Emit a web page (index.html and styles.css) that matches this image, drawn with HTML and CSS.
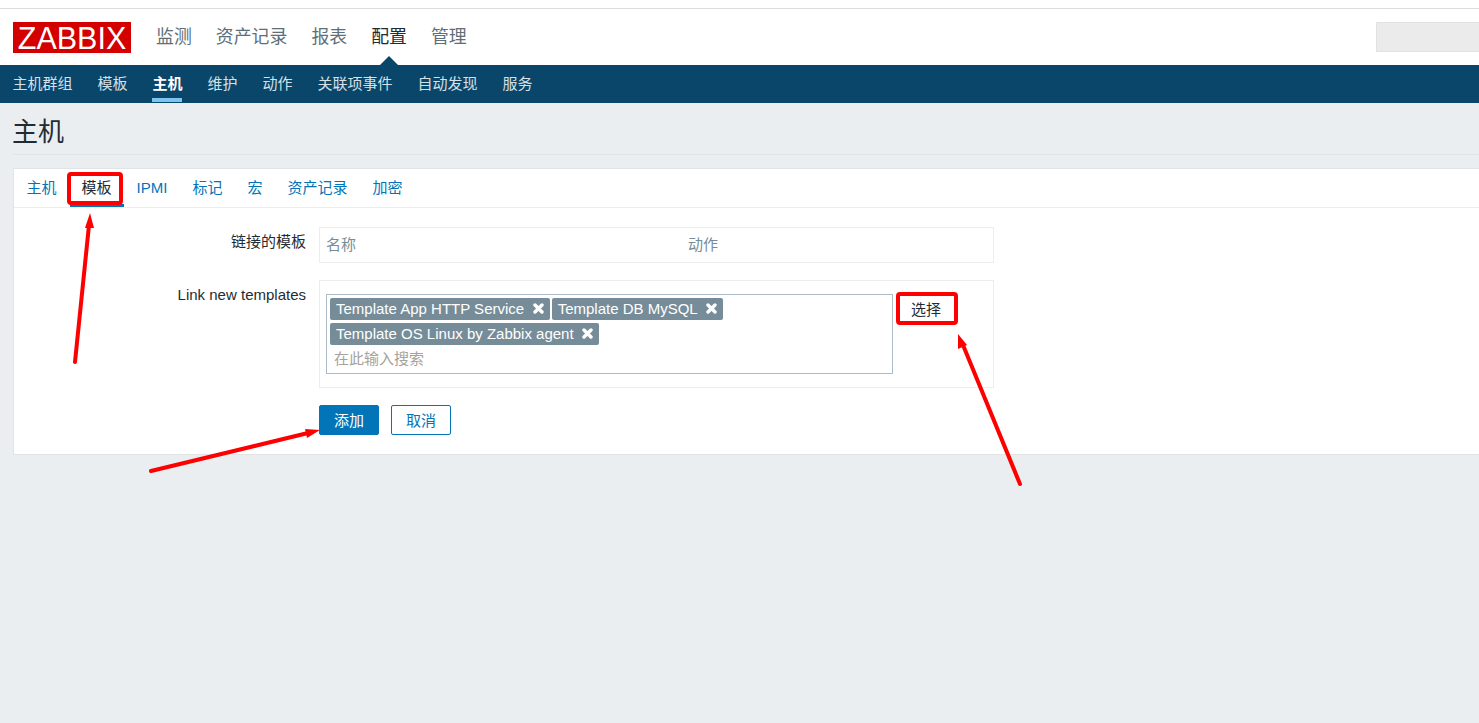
FILE: index.html
```html
<!DOCTYPE html>
<html lang="zh-CN">
<head>
    <meta charset="UTF-8">
    <title>主机</title>
    <link rel="stylesheet" href="styles.css">
</head>
<body>
    <header>
        <div class="top-strip"></div>
        <div class="main-bar">
            <div class="logo">ZABBIX</div>
            <nav class="main-nav">
                <a href="#">监测</a>
                <a href="#">资产记录</a>
                <a href="#">报表</a>
                <a href="#" class="current">配置</a>
                <a href="#">管理</a>
            </nav>
            <div class="search-box"></div>
        </div>
        <nav class="sub-nav">
            <a href="#">主机群组</a>
            <a href="#">模板</a>
            <a href="#" class="current">主机</a>
            <a href="#">维护</a>
            <a href="#">动作</a>
            <a href="#">关联项事件</a>
            <a href="#">自动发现</a>
            <a href="#">服务</a>
        </nav>
    </header>

    <main class="content">
        <h1>主机</h1>
        <div class="card">
            <div class="tabs">
                <a href="#">主机</a>
                <a href="#" class="current">模板</a>
                <a href="#">IPMI</a>
                <a href="#">标记</a>
                <a href="#">宏</a>
                <a href="#">资产记录</a>
                <a href="#">加密</a>
            </div>
            <form class="form">
                <div class="row linked-row">
                    <label>链接的模板</label>
                    <div class="box linked-box">
                        <span class="col-name">名称</span>
                        <span>动作</span>
                    </div>
                </div>
                <div class="row new-row">
                    <label>Link new templates</label>
                    <div class="box new-box">
                        <div class="multiselect">
                            <div class="chips">
                                <span class="chip">Template App HTTP Service
                                    <svg class="chip-x" width="11" height="11" viewBox="0 0 11 11"><path d="M2 2L9 9M9 2L2 9"/></svg>
                                </span>
                                <span class="chip">Template DB MySQL
                                    <svg class="chip-x" width="11" height="11" viewBox="0 0 11 11"><path d="M2 2L9 9M9 2L2 9"/></svg>
                                </span>
                                <span class="chip">Template OS Linux by Zabbix agent
                                    <svg class="chip-x" width="11" height="11" viewBox="0 0 11 11"><path d="M2 2L9 9M9 2L2 9"/></svg>
                                </span>
                            </div>
                            <div class="placeholder">在此输入搜索</div>
                        </div>
                        <button type="button" class="select-btn">选择</button>
                    </div>
                </div>
                <div class="buttons">
                    <button type="button" class="primary">添加</button>
                    <button type="button" class="secondary">取消</button>
                </div>
            </form>
        </div>
    </main>

    <!-- hand drawn annotations on top of the screenshot -->
    <svg class="notes" width="1479" height="723" viewBox="0 0 1479 723">
        <rect x="69" y="174" width="52" height="29" rx="2" class="note-box"/>
        <rect x="898" y="294" width="58" height="29" rx="2" class="note-box"/>
        <line x1="75" y1="362" x2="89" y2="225" class="note-line"/>
        <polygon points="90,213 85,228 94,228" class="note-head"/>
        <line x1="151" y1="471" x2="308" y2="433" class="note-line"/>
        <polygon points="320,430 305,429 307,438" class="note-head"/>
        <line x1="1020" y1="484" x2="963" y2="345" class="note-line"/>
        <polygon points="958,334 958,349 967,345" class="note-head"/>
    </svg>
</body>
</html>
```

FILE: styles.css
```css
* {
    box-sizing: border-box;
}
body {
    margin: 0;
    height: 723px;
    overflow: hidden;
    position: relative;
    font-family: "Liberation Sans", "Noto Sans CJK SC", sans-serif;
    font-size: 15px;
    color: #1f2c33;
    background-color: #ebeef0;
}
a {
    text-decoration: none;
}

/* header */
.top-strip {
    height: 9px;
    background-color: white;
    border-bottom: 1px solid #dcdcdc;
}
.main-bar {
    height: 56px;
    background-color: white;
    display: flex;
    align-items: flex-start;
    padding-left: 13px;
}
.logo {
    width: 118px;
    height: 31px;
    margin-top: 13px;
    background-color: #d40000;
    color: white;
    font-size: 30.5px;
    line-height: 32px;
    text-align: center;
}
.main-nav {
    display: flex;
    gap: 24px;
    margin-left: 25px;
    margin-top: 15px;
}
.main-nav a {
    position: relative;
    font-size: 17.9px;
    line-height: 26px;
    color: #5f6f78;
}
.main-nav a.current {
    color: #1f2c33;
}
.main-nav a.current::after {
    content: "";
    position: absolute;
    left: 9px;
    top: 32px;
    border-left: 9px solid transparent;
    border-right: 9px solid transparent;
    border-bottom: 9px solid #0a466a;
}
.search-box {
    margin-left: auto;
    margin-top: 13px;
    width: 103px;
    height: 30px;
    background-color: #ebebeb;
    border: 1px solid #e2e2e2;
    border-right: none;
}
.sub-nav {
    height: 38px;
    background-color: #0a466a;
    display: flex;
    gap: 25px;
    padding-left: 12.4px;
}
.sub-nav a {
    color: #d5e0e7;
    line-height: 37px;
    height: 37px;
}
.sub-nav a.current {
    color: white;
    font-weight: bold;
    border-bottom: 4px solid #7dc4f0;
}

/* page */
.content {
    padding-left: 13px;
}
h1 {
    margin: 0;
    height: 52px;
    font-size: 26px;
    font-weight: normal;
    line-height: 59px;
    text-indent: -1px;
    color: #1f2c33;
    border-bottom: 1px solid #dfe4e7;
}
.card {
    margin-top: 13px;
    height: 287px;
    background-color: white;
    border: 1px solid #dfe4e7;
    border-right: none;
}
.tabs {
    height: 39px;
    display: flex;
    gap: 25px;
    padding-left: 12.5px;
    border-bottom: 1px solid #ebeef0;
}
.tabs a {
    color: #0275b8;
    line-height: 37px;
    height: 38px;
}
.tabs a.current {
    color: #1f2c33;
    margin: 0 -12px;
    padding: 0 12px;
    border-bottom: 3px solid #0275b8;
}

/* form */
.form {
    padding-top: 19px;
}
.row {
    display: flex;
}
.row label {
    width: 292px;
    text-align: right;
    color: #1f2c33;
}
.linked-row label {
    line-height: 30px;
}
.new-row label {
    line-height: 30px;
}
.box {
    margin-left: 13px;
    width: 675px;
    border: 1px solid #ebeef0;
}
.linked-box {
    height: 36px;
    display: flex;
    padding-left: 6px;
    line-height: 34px;
    color: #768d99;
}
.col-name {
    width: 362px;
}
.new-row {
    margin-top: 17px;
}
.new-box {
    height: 108px;
    display: flex;
    align-items: flex-start;
    padding: 13px 0 0 6px;
}
.multiselect {
    width: 567px;
    height: 80px;
    border: 1px solid #acbbc7;
    padding: 3px 3px 0;
}
.chips {
    display: flex;
    flex-wrap: wrap;
    gap: 3px 2px;
}
.chip {
    display: flex;
    align-items: center;
    height: 22px;
    padding: 0 6px;
    background-color: #768d99;
    border-radius: 2px;
    color: white;
    line-height: 22px;
    white-space: nowrap;
}
.chip-x {
    margin: -2px 0 0 8.5px;
}
.chip-x path {
    fill: none;
    stroke: white;
    stroke-width: 3.4;
    stroke-linecap: round;
}
.placeholder {
    margin: 3px 0 0 4px;
    line-height: 22px;
    color: #a8a29b;
}
button {
    font-family: inherit;
    font-size: 15px;
    padding: 0;
    border-radius: 2px;
    cursor: pointer;
}
.select-btn {
    margin: 0 0 0 4px;
    width: 58px;
    height: 30px;
    padding-bottom: 2px;
    background-color: white;
    border: none;
    color: #1f2c33;
}
.buttons {
    display: flex;
    gap: 12px;
    margin: 17px 0 0 305px;
}
.primary, .secondary {
    width: 60px;
    height: 30px;
    padding-bottom: 2px;
    border: 1px solid #0275b8;
}
.primary {
    background-color: #0275b8;
    color: white;
}
.secondary {
    background-color: white;
    color: #0275b8;
}

/* annotations */
.notes {
    position: absolute;
    left: 0;
    top: 0;
    pointer-events: none;
}
.note-box {
    fill: none;
    stroke: #ff0000;
    stroke-width: 4;
}
.note-line {
    stroke: #ff0000;
    stroke-width: 4;
    stroke-linecap: round;
}
.note-head {
    fill: #ff0000;
}
```
